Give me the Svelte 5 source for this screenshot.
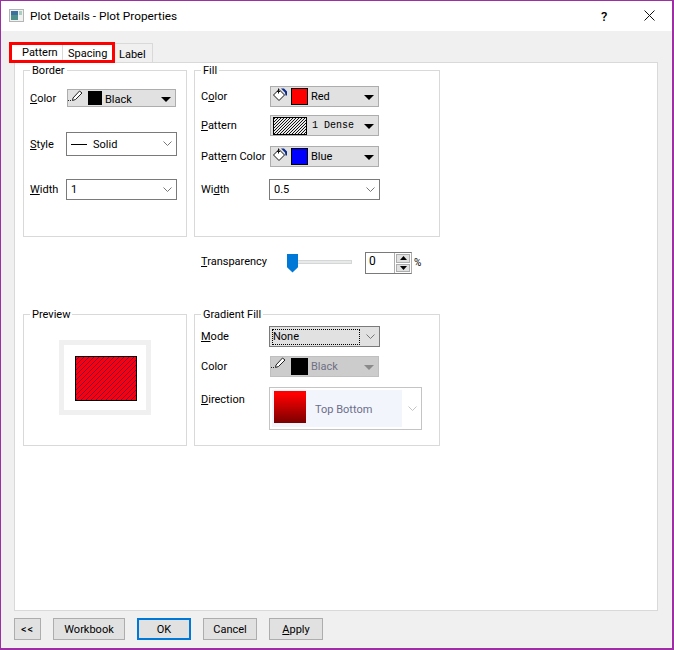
<script>
  const tabs = ['Pattern', 'Spacing'];
  const buttons = [
    { label: 'Workbook', cls: 'w72' },
    { label: 'OK', cls: 'w54 primary' },
    { label: 'Cancel', cls: 'w54' },
    { label: 'Apply', cls: 'w54', key: 'A' }
  ];
  const stripe = [0, 1, 2, 3, 4];
</script>

{#snippet arrow()}
  <svg class="arrow" width="10" height="5" viewBox="0 0 10 5"><path d="M0 0h10L5 5z" fill="currentColor" /></svg>
{/snippet}

{#snippet chevron()}
  <svg class="chev" width="9" height="5" viewBox="0 0 9 5"><path d="M0.500 0.500L4.500 4.500L8.500 0.500" fill="none" stroke="currentColor" /></svg>
{/snippet}

{#snippet pencil()}
  <svg class="icon pen" width="15" height="11" viewBox="0 0 15 11">
    <path d="M5 8L11.500 1L14 3L7.500 9.500L4.500 10.500z" fill="#fff" stroke="#222" stroke-width="1" />
    <path d="M0 10.500h1M2 10.500h1" stroke="#222" />
  </svg>
{/snippet}

{#snippet bucket()}
  <svg class="icon can" width="15" height="14" viewBox="0 0 15 14">
    <path d="M0.500 7L6 1.500L11.500 7L6 12.500z" fill="#fff" stroke="#111" />
    <path d="M5.500 0.500v5M4 3.500h3" stroke="#111" />
    <path d="M8 0.500h3l3 3v4h-1.500l-0.500-3z" fill="#0a2a8c" />
  </svg>
{/snippet}

<div class="window">
  <header class="titlebar">
    <svg class="appicon" width="15" height="13" viewBox="0 0 15 13">
      <rect x="0.500" y="0.500" width="14" height="12" fill="#f1f1f1" stroke="#b5b5b5" />
      <rect x="2" y="2" width="7" height="9" fill="#4f8f8a" />
      <rect x="2" y="2" width="7" height="4" fill="#3d6f9e" />
      <rect x="10" y="2" width="3" height="4" fill="#a9cfc0" />
    </svg>
    <span class="title">Plot Details - Plot Properties</span>
    <span class="help">?</span>
    <svg class="close" width="11" height="11" viewBox="0 0 11 11"><path d="M0.500 0.500L10.500 10.500M10.500 0.500L0.500 10.500" stroke="#111" stroke-width="1" /></svg>
  </header>

  <main class="body">
    <nav class="tabs">
      <div class="marked">
        {#each tabs as tab, i}
          <span class="tab" class:active={i === 0}>{tab}</span>
        {/each}
      </div>
      <span class="tab plain">Label</span>
    </nav>

    <section class="panel">
      <div class="grid">
        <fieldset class="group border">
          <legend>Border</legend>
          <div class="row r1">
            <span class="lbl"><u>C</u>olor</span>
            <div class="colorbox">
              {@render pencil()}
              <i class="swatch black"></i><span>Black</span>{@render arrow()}
            </div>
          </div>
          <div class="row r2">
            <span class="lbl"><u>S</u>tyle</span>
            <div class="combo">
              <i class="line"></i><span>Solid</span>{@render chevron()}
            </div>
          </div>
          <div class="row r3">
            <span class="lbl"><u>W</u>idth</span>
            <div class="combo"><span>1</span>{@render chevron()}</div>
          </div>
        </fieldset>

        <fieldset class="group fill">
          <legend>Fill</legend>
          <div class="row">
            <span class="lbl">C<u>o</u>lor</span>
            <div class="colorbox">
              {@render bucket()}
              <i class="swatch red"></i><span>Red</span>{@render arrow()}
            </div>
          </div>
          <div class="row">
            <span class="lbl"><u>P</u>attern</span>
            <div class="colorbox">
              <svg class="hatch" width="34" height="18" viewBox="0 0 34 18" shape-rendering="crispEdges">
                <defs>
                  <pattern id="h" width="3" height="3" patternUnits="userSpaceOnUse">
                    <rect width="3" height="3" fill="#e8e8e8" />
                    <rect x="2" y="0" width="1" height="1" fill="#111" />
                    <rect x="1" y="1" width="1" height="1" fill="#111" />
                    <rect x="0" y="2" width="1" height="1" fill="#111" />
                  </pattern>
                </defs>
                <rect x="0.500" y="0.500" width="33" height="17" fill="url(#h)" stroke="#000" />
              </svg>
              <span class="mono">1 Dense</span>{@render arrow()}
            </div>
          </div>
          <div class="row">
            <span class="lbl">Patt<u>e</u>rn Color</span>
            <div class="colorbox">
              {@render bucket()}
              <i class="swatch blue"></i><span>Blue</span>{@render arrow()}
            </div>
          </div>
          <div class="row widthrow">
            <span class="lbl">Wi<u>d</u>th</span>
            <div class="combo"><span>0.5</span>{@render chevron()}</div>
          </div>
        </fieldset>

        <div class="transparency">
          <span class="lbl"><u>T</u>ransparency</span>
          <div class="slider"><i class="track"></i><i class="thumb"></i></div>
          <div class="spin">
            <span class="value">0</span>
            <div class="spinbtns">
              <b><svg width="7" height="4" viewBox="0 0 7 4"><path d="M0 4L3.500 0L7 4z" /></svg></b>
              <b><svg width="7" height="4" viewBox="0 0 7 4"><path d="M0 0L3.500 4L7 0z" /></svg></b>
            </div>
          </div>
          <span class="pct">%</span>
        </div>

        <fieldset class="group preview">
          <legend>Preview</legend>
          <div class="frame">
            <svg width="62" height="45" viewBox="0 0 62 45" shape-rendering="crispEdges">
              <defs>
                <pattern id="p" width="5" height="5" patternUnits="userSpaceOnUse">
                  <rect width="5" height="5" fill="#ff0000" />
                  {#each stripe as i}
                    <rect x={i} y={4 - i} width="1" height="1" fill="#6a0a7a" />
                  {/each}
                </pattern>
              </defs>
              <rect x="0.500" y="0.500" width="61" height="44" fill="url(#p)" stroke="#000" />
            </svg>
          </div>
        </fieldset>

        <fieldset class="group gradient">
          <legend>Gradient Fill</legend>
          <div class="row moderow">
            <span class="lbl"><u>M</u>ode</span>
            <div class="combo grey"><span class="focus">None</span>{@render chevron()}</div>
          </div>
          <div class="row colorrow">
            <span class="lbl">Color</span>
            <div class="colorbox disabled">
              {@render pencil()}
              <i class="swatch black"></i><span>Black</span>{@render arrow()}
            </div>
          </div>
          <div class="row dirrow">
            <span class="lbl"><u>D</u>irection</span>
            <div class="direction">
              <div class="dirinner"><i class="grad"></i><span>Top Bottom</span></div>
              {@render chevron()}
            </div>
          </div>
        </fieldset>
      </div>
    </section>

    <footer class="footer">
      <button class="btn w27">&lt;&lt;</button>
      {#each buttons as b}
        <button class="btn {b.cls}">
          {#if b.key}<u>{b.key}</u>{b.label.slice(1)}{:else}{b.label}{/if}
        </button>
      {/each}
    </footer>
  </main>
</div>

<style>
  :global(body) { margin: 0; background: #f0f0f0; }
  .window {
    width: 674px; height: 650px; box-sizing: border-box;
    border: solid #9b2fa3; border-width: 1px 2px 2px 1px;
    display: flex; flex-direction: column;
    font-family: Roboto, "Noto Sans", sans-serif;
    font-size: 11px; color: #000; background: #f0f0f0;
    overflow: hidden;
  }
  .titlebar {
    height: 30px; flex: none; background: #fff;
    display: flex; align-items: center; padding: 0 17px 0 8px;
  }
  .appicon { margin-right: 6px; margin-top: -1px; }
  .title { flex: 1; font-size: 11.800px; }
  .help { font-size: 13px; width: 8px; margin-right: 35px; font-weight: 500; }
  .close { margin-top: -1px; }

  .body { flex: 1; display: flex; flex-direction: column; padding: 11px 14px 8px 13px; min-height: 0; }
  .tabs { display: flex; align-items: flex-end; height: 20px; position: relative; z-index: 1; margin-left: -5px; }
  .marked {
    display: flex; box-sizing: border-box; height: 21px; width: 106px;
    border: 3px solid #f00; margin-bottom: -1px; background: #fff;
  }
  .tab { box-sizing: border-box; }
  .marked .tab.active { padding-left: 10px; width: 51px; line-height: 15px; border-right: 1px solid #d9d9d9; }
  .marked .tab:not(.active) { padding-left: 5px; flex: 1; line-height: 18px; }
  .tab.plain {
    height: 19px; width: 38px; padding-left: 4px; background: #f0f0f0;
    border: 1px solid #d9d9d9; border-width: 1px 1px 0 0; line-height: 21px;
  }
  .panel { flex: 1; background: #fff; border: 1px solid #d9d9d9; padding: 0 8px; min-height: 0; }
  .grid {
    display: grid; grid-template-columns: 164px 246px; column-gap: 7px;
    grid-template-rows: 174px 70px 139px;
  }
  .group {
    margin: 0; padding: 0 0 0 6px; border: 1px solid #d9d9d9; min-width: 0; box-sizing: border-box;
  }
  legend { padding: 0 2px; margin-left: 0; line-height: 14px; position: relative; top: 1px; }
  .row { display: flex; align-items: center; }
  .lbl { display: inline-block; }
  .border .lbl { width: 36px; }
  .fill .lbl, .gradient .lbl { width: 69px; white-space: nowrap; flex: none; }

  .border .r1 { height: 18px; margin-top: 12px; }
  .border .r1 .lbl { width: 35px; }
  .border .r1 .colorbox { margin-left: 2px; }
  .border .r1 .colorbox span { padding-top: 2px; }
  .border .r2 { height: 24px; margin-top: 25px; }
  .border .r2 .combo { height: 24px; }
  .border .r3 { height: 21px; margin-top: 23px; }

  .fill .row { height: 21px; margin-top: 8px; }
  .fill .row:nth-of-type(1) { margin-top: 9px; }
  .fill .row:nth-of-type(3) { margin-top: 10px; }
  .fill .widthrow { margin-top: 12px; }
  .fill .colorbox, .colorrow .colorbox { margin-left: 1px; }
  .fill .lbl, .gradient .lbl { margin-right: -1px; }

  .colorbox {
    box-sizing: border-box; width: 109px; height: 21px; flex: none;
    background: #e1e1e1; border: 1px solid #adadad;
    display: flex; align-items: center; position: relative; padding-left: 20px;
  }
  .border .colorbox { height: 18px; }
  .icon { position: absolute; }
  .pen { left: 0; top: 0; }
  .can { left: 2px; top: 1px; }
  .swatch { width: 17px; height: 17px; border: 1px solid #000; box-sizing: border-box; margin-right: 3px; display: block; }
  .border .swatch { width: 14px; height: 14px; }
  .black { background: #000; } .red { background: #f00; } .blue { background: #00f; }
  .hatch { position: absolute; left: 2px; top: 1px; }
  .mono { font-family: "Liberation Mono", monospace; font-size: 10px; margin-left: 21px; }
  .arrow { position: absolute; right: 4px; top: 8px; color: #000; }
  .border .arrow { top: 7px; }

  .combo {
    box-sizing: border-box; width: 111px; height: 21px; flex: none;
    background: #fff; border: 1px solid #7a7a7a;
    display: flex; align-items: center; padding-left: 4px; position: relative;
  }
  .chev { position: absolute; right: 4px; top: calc(50% - 3px); color: #777; }
  .line { display: block; width: 16px; border-top: 1px solid #000; margin-right: 6px; }
  .combo.grey { background: #e1e1e1; padding-left: 2px; }
  .focus { display: block; width: 88px; height: 16px; border: 1px dotted #000; box-sizing: border-box; line-height: 14px; }
  .moderow { height: 21px; margin-top: 5px; }
  .colorrow { height: 21px; margin-top: 9px; }
  .disabled { background: #ccc; border-color: #bfbfbf; color: #6f6f85; }
  .disabled .arrow { color: #8a8a8a; }
  .dirrow { align-items: flex-start; margin-top: 10px; }
  .dirrow .lbl { line-height: 16px; margin-top: 5px; }
  .direction {
    box-sizing: border-box; width: 153px; height: 43px;
    border: 1px solid #c4c4c4; background: #fff; padding: 2px; position: relative; color: #6d6d8a;
  }
  .direction .chev { color: #c4c4c4; }
  .dirinner { width: 130px; height: 37px; background: #f2f6fc; display: flex; align-items: center; padding-left: 2px; box-sizing: border-box; }
  .grad { display: block; width: 32px; height: 32px; margin: -3px 9px 0 0; background: linear-gradient(#ff0000 10%, #7a0000); }
  .dirinner span { margin-top: 1px; }

  .transparency {
    grid-column: 2; grid-row: 2;
    display: flex; align-items: center; height: 22px; margin-top: 15px; padding-left: 7px;
  }
  .transparency .lbl { width: 86px; margin-top: -4px; }
  .slider { width: 65px; height: 19px; position: relative; margin-right: 13px; }
  .track { position: absolute; left: 2px; right: 0; top: 6px; height: 4px; background: #e7eaea; border: 1px solid #d6d6d6; box-sizing: border-box; }
  .thumb {
    position: absolute; left: 0; top: 0; width: 11px; height: 19px; background: #0078d7;
    clip-path: polygon(0 0, 100% 0, 100% 72%, 50% 100%, 0 72%);
  }
  .spin { display: flex; width: 47px; height: 22px; box-sizing: border-box; border: 1px solid #7a7a7a; border-right-color: #adadad; background: #fff; }
  .value { width: 28px; padding-left: 3px; box-sizing: border-box; line-height: 16px; font-size: 12px; }
  .spinbtns { flex: 1; display: flex; flex-direction: column; gap: 1px; border-left: 1px solid #adadad; padding: 1px; background: #fff; }
  .spinbtns b { flex: 1; background: #e1e1e1; border: 1px solid #adadad; display: flex; align-items: center; justify-content: center; }
  .spinbtns svg { display: block; }
  .pct { margin-left: 2px; margin-top: -1px; font-size: 10px; }

  .preview { grid-column: 1; grid-row: 3; }
  .frame {
    box-sizing: border-box; width: 92px; height: 75px; border: 5px solid #f0f0f0;
    margin: 19px 0 0 29px; padding: 11px;
  }
  .frame svg { display: block; }
  .gradient { grid-column: 2; grid-row: 3; }

  .footer { height: 22px; flex: none; display: flex; gap: 12px; margin-top: 7px; }
  .btn {
    box-sizing: border-box; height: 22px; background: #e1e1e1; border: 1px solid #adadad; padding: 0;
    font: inherit; color: #000;
  }
  .w27 { width: 27px; letter-spacing: 1px; }
  :global(.btn.w72) { width: 72px; }
  :global(.btn.w54) { width: 54px; }
  :global(.btn.primary) { border: 2px solid #0078d7; }
  u { text-underline-offset: 1px; }
</style>
